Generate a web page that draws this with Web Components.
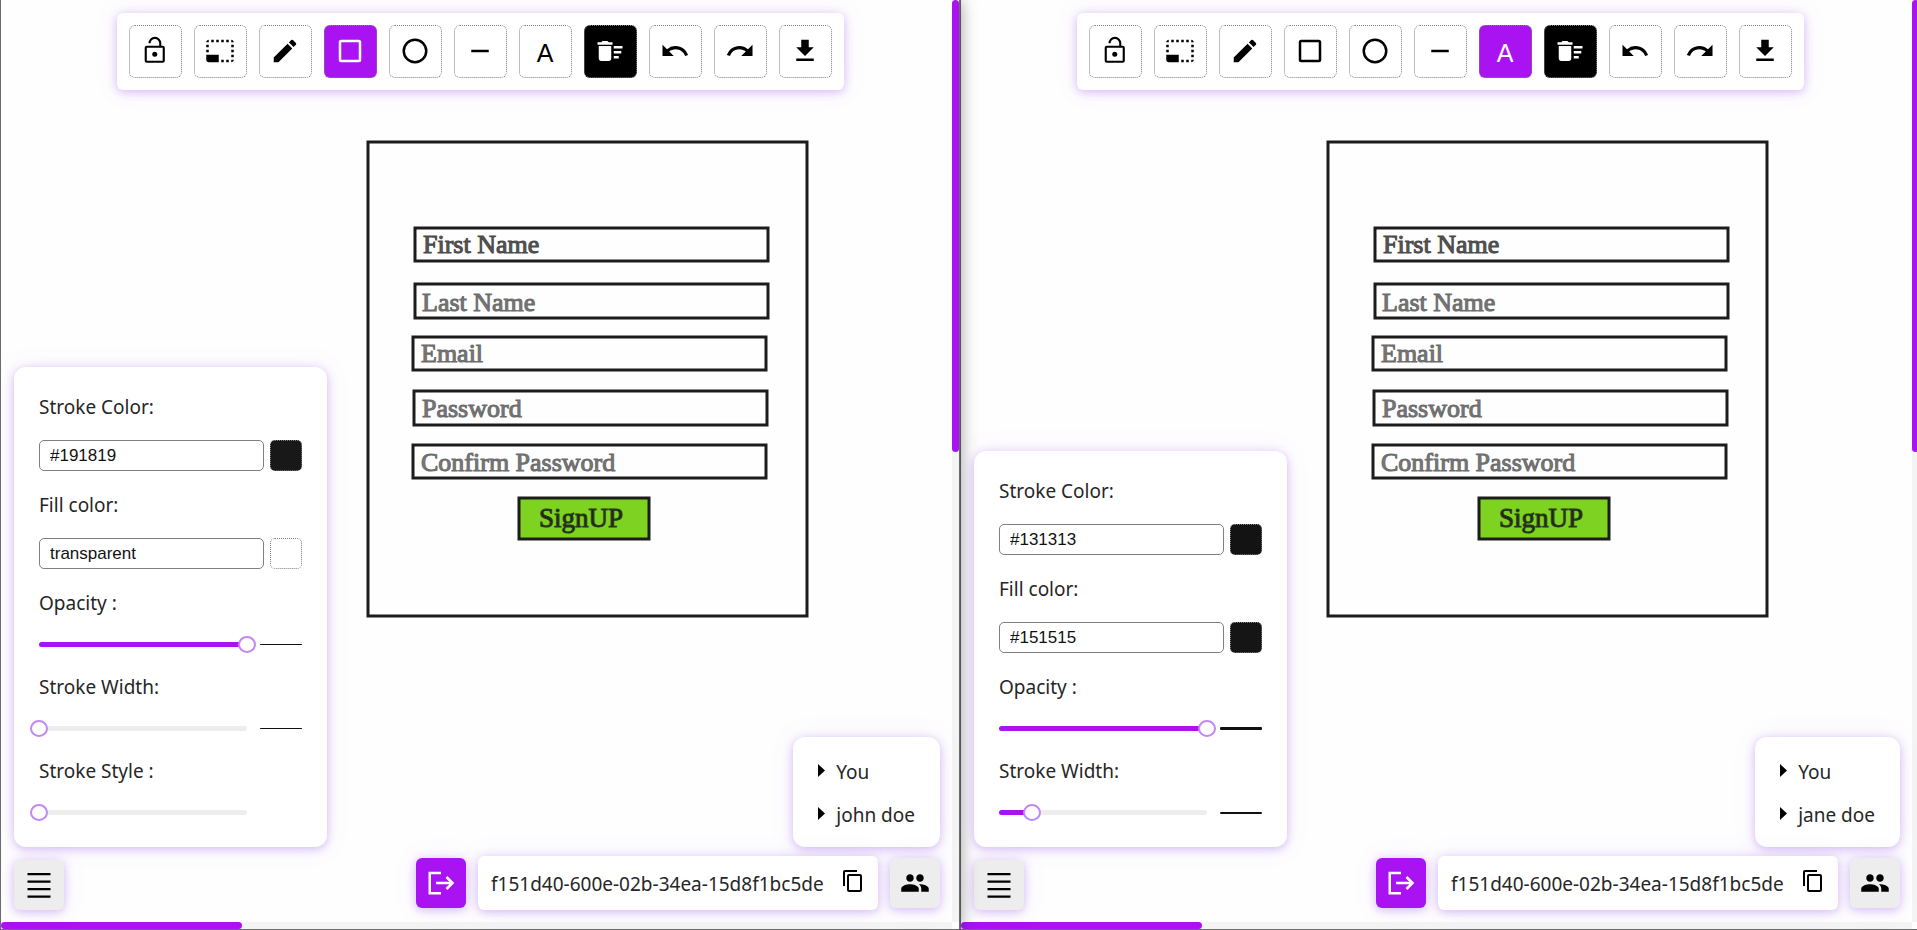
<!DOCTYPE html>
<html lang="en">
<head>
<meta charset="utf-8">
<title>Shared whiteboard</title>
<style>
  html, body { margin: 0; height: 100%; overflow: hidden; }
  body {
    --accent: #a913f2;
    --glow: 0 2px 10px rgba(160, 95, 235, .4), 0 0 24px rgba(160, 95, 235, .1);
    font: 19px/27px "Noto Sans", "Open Sans", sans-serif;
    color: #262626;
    display: grid;
    grid-template-columns: repeat(2, round(up, calc(50vw + 1px), 1px));
    background: #fefefe;
  }
  board-window { z-index: 0; }
  board-window:first-child { z-index: 1; }
</style>
</head>
<body>
<board-window room="f151d40-600e-02b-34ea-15d8f1bc5de" tool="rectangle">
  <style-panel slot="panel">
    <color-field label="Stroke Color:" value="#191819" swatch="#191819"></color-field>
    <color-field label="Fill color:" value="transparent" swatch="transparent"></color-field>
    <range-field label="Opacity :" value="100" line="1"></range-field>
    <range-field label="Stroke Width:" value="0" line="1"></range-field>
    <range-field label="Stroke Style :" value="0" line="0"></range-field>
  </style-panel>
  <user-item slot="users">You</user-item>
  <user-item slot="users">john doe</user-item>
</board-window>
<board-window room="f151d40-600e-02b-34ea-15d8f1bc5de" tool="text">
  <style-panel slot="panel">
    <color-field label="Stroke Color:" value="#131313" swatch="#131313"></color-field>
    <color-field label="Fill color:" value="#151515" swatch="#151515"></color-field>
    <range-field label="Opacity :" value="100" line="3"></range-field>
    <range-field label="Stroke Width:" value="16" line="2"></range-field>
  </style-panel>
  <user-item slot="users">You</user-item>
  <user-item slot="users">jane doe</user-item>
</board-window>

<script>
const ICONS = {
  lock: '<g fill="none" stroke="currentColor" stroke-width="1.7"><rect x="4.6" y="8.6" width="14.4" height="12" rx=".8"/><path d="M7.6 5.8a4.3 4.3 0 0 1 8.6 0v2.6"/></g><circle cx="11.8" cy="14.5" r="2"/>',
  select: '<path d="M23 15h-2v2h2v-2zm0-4h-2v2h2v-2zm0 8h-2v2c1 0 2-1 2-2zM15 3h-2v2h2V3zm8 4h-2v2h2V7zm-2-4v2h2c0-1-1-2-2-2zM3 21h8v-6H1v4c0 1.1.9 2 2 2zM3 7H1v2h2V7zm12 12h-2v2h2v-2zm4-16h-2v2h2V3zm0 16h-2v2h2v-2zM3 3C2 3 1 4 1 5h2V3zm0 8H1v2h2v-2zm8-8H9v2h2V3zM7 3H5v2h2V3z"/>',
  pencil: '<path d="M3 17.25V21h3.75L17.81 9.94l-3.75-3.75L3 17.25zM20.71 7.04a.996.996 0 0 0 0-1.41l-2.34-2.34a.996.996 0 0 0-1.41 0l-1.83 1.83 3.75 3.75 1.83-1.83z"/>',
  rectangle: '<rect x="4" y="4" width="16" height="16" rx="1" fill="none" stroke="currentColor" stroke-width="2"/>',
  circle: '<circle cx="12" cy="12" r="9" fill="none" stroke="currentColor" stroke-width="2"/>',
  line: '<path d="M19 13H5v-2h14v2z"/>',
  clear: '<path d="M15 16h4v2h-4zm0-8h7v2h-7zm0 4h6v2h-6zM3 18c0 1.1.9 2 2 2h6c1.1 0 2-.9 2-2V8H3v10zM14 5h-3l-1-1H6L5 5H2v2h12z"/>',
  undo: '<path d="M12.5 8c-2.65 0-5.05.99-6.9 2.6L2 7v9h9l-3.62-3.62c1.39-1.16 3.16-1.88 5.12-1.88 3.54 0 6.55 2.31 7.6 5.5l2.37-.78C21.08 11.03 17.15 8 12.5 8z"/>',
  redo: '<path d="M18.4 10.6C16.55 8.99 14.15 8 11.5 8c-4.65 0-8.58 3.03-9.96 7.22L3.9 16a8.002 8.002 0 0 1 7.6-5.5c1.95 0 3.73.72 5.12 1.88L13 16h9V7l-3.6 3.6z"/>',
  download: '<path d="M19 9h-4V3H9v6H5l7 7 7-7zM5 18v2h14v-2H5z"/>',
  menu: '<path d="M2.8 2.3h18.4v1.8H2.8zm0 6h18.4v1.8H2.8zm0 6h18.4v1.8H2.8zm0 6h18.4v1.8H2.8z"/>',
  exit: '<path d="M12 3.9H3v16.2h9M8 12h13.4M16.4 7.2l4.8 4.8-4.8 4.8" fill="none" stroke="currentColor" stroke-width="2"/>',
  copy: '<path d="M16 1H4c-1.1 0-2 .9-2 2v14h2V3h12V1zm3 4H8c-1.1 0-2 .9-2 2v14c0 1.1.9 2 2 2h11c1.1 0 2-.9 2-2V7c0-1.1-.9-2-2-2zm0 16H8V7h11v14z"/>',
  people: '<path d="M16 11c1.66 0 2.99-1.34 2.99-3S17.66 5 16 5c-1.66 0-3 1.34-3 3s1.34 3 3 3zm-8 0c1.66 0 2.99-1.34 2.99-3S9.66 5 8 5C6.34 5 5 6.34 5 8s1.34 3 3 3zm0 2c-2.33 0-7 1.17-7 3.5V19h14v-2.5c0-2.33-4.67-3.5-7-3.5zm8 0c-.29 0-.62.02-.97.05 1.16.84 1.97 1.97 1.97 3.45V19h6v-2.5c0-2.33-4.67-3.5-7-3.5z"/>'
};

const define = (name, render) => customElements.define(name, class extends HTMLElement {
  connectedCallback() {
    if (this.shadowRoot) return;
    this.attachShadow({ mode: 'open' }).innerHTML = render(this);
  }
});

define('board-icon', el => `
  <style>
    :host { display: block; width: 30px; height: 30px; }
    svg { display: block; width: 100%; height: 100%; fill: currentColor; }
  </style>
  <svg viewBox="0 0 24 24" aria-hidden="true">${ICONS[el.getAttribute('name')]}</svg>`);

define('tool-bar', el => {
  const tools = [['lock', 'Lock'], ['select', 'Select'], ['pencil', 'Pencil'], ['rectangle', 'Rectangle'],
    ['circle', 'Circle'], ['line', 'Line'], ['text', 'Text'], ['clear', 'Clear'], ['undo', 'Undo'],
    ['redo', 'Redo'], ['download', 'Download']];
  return `
  <style>
    :host { display: flex; gap: 12px; padding: 12px; border-radius: 6px; background: #fff; box-shadow: var(--glow); }
    button {
      box-sizing: border-box; width: 53px; height: 53px; padding: 0 1px 1px 0; border: 1px dotted #808080;
      border-radius: 6px; background: #fff; color: #000; display: grid; place-items: center;
      font: 25px/30px "Liberation Sans", Arial, sans-serif;
    }
    button[aria-pressed="true"] { background: var(--accent); color: #fff; }
    button.clear { background: #000; color: #fff; }
    span { padding-top: 4px; }
  </style>
  ${tools.map(([id, title]) => `<button type="button" class="${id}" aria-label="${title}" aria-pressed="${id === el.getAttribute('active')}">${
    id === 'text' ? '<span>A</span>' : `<board-icon name="${id}"></board-icon>`}</button>`).join('')}`;
});

define('style-panel', () => `
  <style>
    :host {
      box-sizing: border-box; display: flex; flex-direction: column; gap: 21px; width: 313px; padding: 27px 25px 26px;
      border-radius: 12px; background: #fff; box-shadow: var(--glow);
    }
  </style>
  <slot></slot>`);

define('color-field', el => `
  <style>
    :host { display: grid; grid-template-columns: 1fr 32px; gap: 19px 6px; }
    label { grid-column: 1 / -1; }
    input, button { box-sizing: border-box; height: 31px; margin: 0; border-radius: 5px; }
    input {
      width: 100%; min-width: 0; padding: 0 10px; border: 1px solid #808080; background: #fff; color: #111;
      font: 17px/20px "Liberation Sans", Arial, sans-serif;
    }
    button { padding: 0; border: 1px dotted #808080; background: ${el.getAttribute('swatch')}; }
  </style>
  <label for="value">${el.getAttribute('label')}</label>
  <input id="value" type="text" value="${el.getAttribute('value')}">
  <button type="button" aria-label="Pick a color"></button>`);

define('range-field', el => `
  <style>
    :host { display: grid; grid-template-columns: 208px 42px; gap: 19px 13px; align-items: center; }
    label { grid-column: 1 / -1; }
    .slider { display: grid; align-items: center; height: 17px; }
    .slider > * { grid-area: 1 / 1; }
    .track {
      height: 5px; border-radius: 3px;
      background: linear-gradient(to right, var(--accent) ${el.getAttribute('value')}%, #ededed 0);
    }
    input { appearance: none; width: calc(100% + 18px); height: 17px; margin: 0 -9px; background: none; }
    input::-webkit-slider-thumb {
      appearance: none; box-sizing: border-box; width: 18px; height: 17px; border: 2px solid #bf8af2;
      border-radius: 50%; background: #fff;
    }
    .line { height: ${el.getAttribute('line')}px; border-radius: 1px; background: #111; }
  </style>
  <label for="range">${el.getAttribute('label')}</label>
  <div class="slider"><div class="track"></div><input id="range" type="range" min="0" max="100" value="${el.getAttribute('value')}"></div>
  <div class="line"></div>`);

define('user-item', () => `
  <style>
    :host { display: flex; align-items: center; gap: 11px; white-space: nowrap; }
    svg { display: block; width: 7px; height: 13px; padding-bottom: 5px; }
  </style>
  <svg viewBox="0 0 7 13" aria-hidden="true"><path d="M0 0l7 6.5L0 13z"/></svg>
  <span><slot></slot></span>`);

define('room-bar', el => `
  <style>
    :host { display: flex; align-items: center; gap: 12px; }
    button { padding: 0; border: 0; color: #000; display: grid; place-items: center; }
    .exit, .users { width: 50px; height: 50px; border-radius: 6px; box-shadow: var(--glow); }
    .exit { background: var(--accent); color: #fff; }
    .users { background: #ededed; }
    .room {
      box-sizing: border-box; display: flex; align-items: center; justify-content: space-between; min-width: 400px; height: 54px;
      padding: 2px 13px 0; border-radius: 6px; background: #fff; box-shadow: var(--glow);
    }
    .copy { background: none; padding-bottom: 6px; }
    .copy board-icon { width: 24px; height: 24px; }
  </style>
  <button type="button" class="exit" aria-label="Leave room"><board-icon name="exit"></board-icon></button>
  <div class="room"><span>${el.getAttribute('room')}</span>
    <button type="button" class="copy" aria-label="Copy room id"><board-icon name="copy"></board-icon></button></div>
  <button type="button" class="users" aria-label="Users"><board-icon name="people"></board-icon></button>`);

define('sketch-canvas', () => `
  <style>
    :host { display: block; background: #fefefe; }
    svg { display: block; width: 100%; height: 100%; }
    rect { fill: none; stroke: #1c1c1c; stroke-width: 3px; }
    text { font: 26px "Liberation Serif", "Times New Roman", serif; fill: #777; stroke: #6c6c6c; stroke-width: 1px; }
    .dark { fill: #555; stroke: #4a4a4a; }
    .action { fill: #7ed321; }
    .caption { font-size: 27px; fill: #222; stroke: #2a3a1a; }
  </style>
  <svg role="img" aria-label="Sign up form sketch">
    <rect x="367" y="142" width="439" height="474"/>
    <rect x="414" y="228" width="353" height="33"/>
    <rect x="414" y="284" width="353" height="34"/>
    <rect x="412" y="337" width="353" height="33"/>
    <rect x="413" y="391" width="353" height="34"/>
    <rect x="412" y="445" width="353" height="33"/>
    <rect class="action" x="518" y="498" width="130" height="41"/>
    <text class="dark" x="422" y="253">First Name</text>
    <text x="421" y="311">Last Name</text>
    <text x="420" y="362">Email</text>
    <text x="421" y="417">Password</text>
    <text x="420" y="471">Confirm Password</text>
    <text class="caption" x="538" y="527">SignUP</text>
  </svg>`);

define('board-window', el => `
  <style>
    :host {
      box-sizing: border-box; position: relative; display: grid; height: 100vh; overflow: hidden;
      grid-template: minmax(0, 1fr) 7px / minmax(0, 1fr) 7px;
      border: 1px solid #6b6b6b; border-top: 0; background: #fefefe; box-shadow: 0 0 16px rgba(0, 0, 0, .4);
    }
    sketch-canvas { grid-area: 1 / 1; }
    .bar { background: #f4f4f4; }
    .bar div { border-radius: 4px; background: var(--accent); }
    .vertical { grid-area: 1 / 2; }
    .vertical div { height: 49%; }
    .horizontal { grid-area: 2 / 1; }
    .horizontal div { width: 241px; height: 100%; }
    .overlay {
      grid-area: 1 / 1 / -1 / -1; z-index: 1; display: flex; flex-direction: column; justify-content: space-between;
      padding: 13px 19px 19px 13px;
    }
    header { display: flex; justify-content: center; padding-left: 7px; }
    footer { display: flex; justify-content: space-between; align-items: flex-end; }
    .left, .right { display: flex; flex-direction: column; }
    .left { gap: 13px; align-items: flex-start; }
    .right { gap: 9px; align-items: flex-end; }
    .menu {
      width: 50px; height: 50px; padding: 0; border: 0; border-radius: 6px; background: #ededed; color: #000;
      display: grid; place-items: center; box-shadow: var(--glow);
    }
    .users {
      display: flex; flex-direction: column; gap: 16px; padding: 22px 25px 18px; border-radius: 12px; background: #fff;
      box-shadow: var(--glow);
    }
  </style>
  <sketch-canvas></sketch-canvas>
  <div class="bar vertical"><div></div></div>
  <div class="bar horizontal"><div></div></div>
  <div class="overlay">
    <header><tool-bar active="${el.getAttribute('tool')}"></tool-bar></header>
    <footer>
      <div class="left">
        <slot name="panel"></slot>
        <button type="button" class="menu" aria-label="Menu"><board-icon name="menu"></board-icon></button>
      </div>
      <div class="right">
        <div class="users"><slot name="users"></slot></div>
        <room-bar room="${el.getAttribute('room')}"></room-bar>
      </div>
    </footer>
  </div>`);
</script>
</body>
</html>
